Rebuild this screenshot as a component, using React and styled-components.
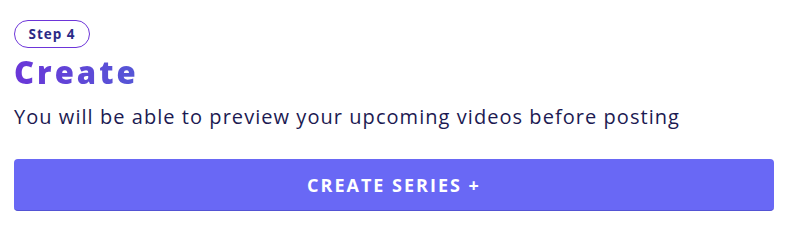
import React from "react";
import styled, { createGlobalStyle } from "styled-components";

const Global = createGlobalStyle`
  html, body { margin: 0; padding: 0; background: #ffffff; }
  body { font-family: "Open Sans", "Noto Sans", sans-serif; }
`;

const Section = styled.section`
  display: flex;
  flex-direction: column;
  align-items: flex-start;
  padding: 20px 26px 0 14px;
`;

const Badge = styled.span`
  display: inline-flex;
  align-items: center;
  justify-content: center;
  box-sizing: border-box;
  width: 76px;
  height: 28px;
  border: 1.5px solid #6d35d9;
  border-radius: 14px;
  font-size: 13.5px;
  font-weight: 700;
  color: #2b2a86;
  letter-spacing: 1px;
`;

const Title = styled.h1`
  margin: 5px 0 0;
  font-size: 31px;
  line-height: 38px;
  font-weight: 800;
  letter-spacing: 3px;
  background: linear-gradient(90deg, #6a36d8 0%, #5557d6 100%);
  -webkit-background-clip: text;
  background-clip: text;
  color: transparent;
`;

const Subtitle = styled.p`
  margin: 14px 0 0;
  font-size: 20px;
  line-height: 24px;
  font-weight: 500;
  color: #1c1a52;
  letter-spacing: 1.05px;
`;

const Button = styled.button`
  margin-top: 30px;
  align-self: stretch;
  height: 52px;
  border: none;
  border-bottom: 1px solid #5454d4;
  border-radius: 4px;
  background: #6968f5;
  color: #ffffff;
  font-family: inherit;
  font-size: 18px;
  font-weight: 700;
  letter-spacing: 2px;
  cursor: pointer;
`;

export default function App() {
  return (
    <>
      <Global />
      <Section>
        <Badge>Step 4</Badge>
        <Title>Create</Title>
        <Subtitle>You will be able to preview your upcoming videos before posting</Subtitle>
        <Button>CREATE SERIES +</Button>
      </Section>
    </>
  );
}
